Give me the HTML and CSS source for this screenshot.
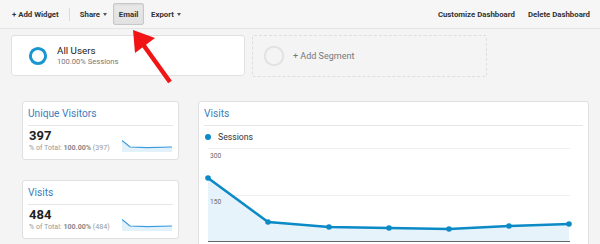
FILE: index.html
```html
<!DOCTYPE html>
<html>
<head>
<meta charset="utf-8">
<link rel="stylesheet" href="styles.css">
</head>
<body>
<div class="toolbar">
  <span class="tb-item">+ Add Widget</span>
  <span class="tb-sep"></span>
  <span class="tb-item share">Share <span class="caret"></span></span>
  <span class="tb-btn">Email</span>
  <span class="tb-item export">Export <span class="caret"></span></span>
  <span class="tb-spacer"></span>
  <span class="tb-item">Customize Dashboard</span>
  <span class="tb-item last">Delete Dashboard</span>
</div>

<div class="segments">
  <div class="seg-card">
    <svg class="ring" width="20" height="20" viewBox="0 0 20 20"><circle cx="10" cy="10" r="7.6" fill="none" stroke="#1b95d2" stroke-width="3"/></svg>
    <div class="seg-text">
      <div class="seg-name">All Users</div>
      <div class="seg-sub">100.00% Sessions</div>
    </div>
  </div>
  <div class="seg-add">
    <svg class="ring" width="22" height="22" viewBox="0 0 22 22"><circle cx="11" cy="11" r="9.2" fill="none" stroke="#e2e2e2" stroke-width="2"/></svg>
    <span class="seg-add-text">+ Add Segment</span>
  </div>
</div>

<div class="widgets">
  <div class="col-left">
    <div class="card small">
      <div class="card-title">Unique Visitors</div>
      <div class="small-body">
        <div class="metric">
          <div class="metric-val">397</div>
          <div class="metric-pct">% of Total: <b>100.00%</b> (397)</div>
        </div>
        <svg class="spark" width="51" height="12" viewBox="0 0 51 12">
          <polygon points="0,0 8,7 25,8 50,7 50,12 0,12" fill="#e3f1fb"/>
          <polyline points="0,0.5 8,7 25,7.6 50,7" fill="none" stroke="#3a9be0" stroke-width="1.2"/>
        </svg>
      </div>
    </div>
    <div class="card small">
      <div class="card-title">Visits</div>
      <div class="small-body">
        <div class="metric">
          <div class="metric-val">484</div>
          <div class="metric-pct">% of Total: <b>100.00%</b> (484)</div>
        </div>
        <svg class="spark" width="51" height="12" viewBox="0 0 51 12">
          <polygon points="0,0 8,7 25,8 50,7 50,12 0,12" fill="#e3f1fb"/>
          <polyline points="0,0.5 8,7 25,7.6 50,7" fill="none" stroke="#3a9be0" stroke-width="1.2"/>
        </svg>
      </div>
    </div>
  </div>
  <div class="card big">
    <div class="card-title">Visits</div>
    <div class="legend"><span class="dot"></span>Sessions</div>
    <svg class="chart" width="380" height="95" viewBox="0 0 380 95">
      <line x1="4" y1="0.5" x2="366" y2="0.5" stroke="#eeeeee" stroke-width="1"/>
      <line x1="4" y1="47.5" x2="366" y2="47.5" stroke="#eeeeee" stroke-width="1"/>
      <polygon points="4,30 64,74 125,79 185,80 245,81 305,78 365,76 365,93 4,93" fill="#e7f3fa"/>
      <text x="6" y="10" class="axis">300</text>
      <text x="6" y="56" class="axis">150</text>
      <polyline points="4,30 64,74 125,79 185,80 245,81 305,78 365,76" fill="none" stroke="#0b8ac6" stroke-width="2.6" stroke-linejoin="round"/>
      <g fill="#0b8ac6">
        <circle cx="4" cy="30" r="2.8"/>
        <circle cx="64" cy="74" r="2.8"/>
        <circle cx="125" cy="79" r="2.8"/>
        <circle cx="185" cy="80" r="2.8"/>
        <circle cx="245" cy="81" r="2.8"/>
        <circle cx="305" cy="78" r="2.8"/>
        <circle cx="365" cy="76" r="2.8"/>
      </g>
      <line x1="4" y1="93.5" x2="366" y2="93.5" stroke="#666" stroke-width="1"/>
    </svg>
  </div>
</div>

<svg class="arrow" width="600" height="244" viewBox="0 0 600 244">
  <line x1="170" y1="82" x2="142" y2="43" stroke="#f01414" stroke-width="4.5"/>
  <polygon points="133,30 155,38 135,53" fill="#f01414"/>
</svg>
</body>
</html>
```

FILE: styles.css
```css
html, body {
  margin: 0;
  padding: 0;
}
body {
  width: 600px;
  height: 244px;
  overflow: hidden;
  background: #f4f4f4;
  font-family: Roboto, "Liberation Sans", Arial, sans-serif;
  color: #333;
  position: relative;
}
.toolbar {
  height: 28px;
  display: flex;
  align-items: center;
  padding: 0 10px 0 12px;
  background: #f6f6f6;
  border-bottom: 1px solid #e4e4e4;
  font-size: 7.8px;
  font-weight: bold;
  color: #333;
}
.tb-item {
  white-space: nowrap;
  display: flex;
  align-items: center;
}
.tb-sep {
  width: 1px;
  height: 13px;
  background: #dcdcdc;
  margin: 0 10px 0 10px;
}
.caret {
  display: inline-block;
  width: 0;
  height: 0;
  border-left: 2.5px solid transparent;
  border-right: 2.5px solid transparent;
  border-top: 3px solid #555;
  margin-left: 3px;
}
.tb-btn {
  margin-left: 6px;
  width: 29px;
  height: 20px;
  display: flex;
  align-items: center;
  justify-content: center;
  border: 1px solid #c8c8c8;
  border-radius: 2px;
  background: linear-gradient(#e9e9e9, #e2e2e2);
  box-shadow: inset 0 1px 2px rgba(0,0,0,0.08);
}
.export {
  margin-left: 7px;
}
.tb-spacer {
  flex: 1;
}
.tb-item.last {
  margin-left: 13px;
}
.segments {
  display: flex;
  gap: 7px;
  padding: 6px 0 0 11px;
}
.seg-card {
  width: 234px;
  height: 41px;
  box-sizing: border-box;
  background: #fff;
  border: 1px solid #e1e1e1;
  border-radius: 3px;
  display: flex;
  align-items: center;
  padding-left: 16px;
}
.seg-card .ring {
  margin-right: 9px;
}
.seg-name {
  font-size: 9.8px;
  color: #222;
  line-height: 12px;
}
.seg-sub {
  font-size: 7.6px;
  color: #777;
  line-height: 10px;
}
.seg-add {
  width: 235px;
  height: 42px;
  box-sizing: border-box;
  border: 1px dashed #dedede;
  border-radius: 2px;
  display: flex;
  align-items: center;
  padding-left: 10px;
}
.seg-add .ring {
  margin-right: 8px;
}
.seg-add-text {
  font-size: 9px;
  color: #777;
}
.widgets {
  display: flex;
  align-items: flex-start;
  gap: 19px;
  padding: 24px 0 0 22px;
}
.col-left {
  display: flex;
  flex-direction: column;
  gap: 20px;
}
.card {
  background: #fff;
  border: 1px solid #e0e0e0;
  border-radius: 3px;
  box-sizing: border-box;
}
.card.small {
  width: 157px;
  height: 59px;
  padding: 0 5px;
}
.card-title {
  font-size: 10.2px;
  color: #3b7dbd;
  height: 23px;
  line-height: 24px;
  border-bottom: 1px solid #e6e6e6;
}
.small-body {
  display: flex;
  justify-content: space-between;
  align-items: flex-end;
  padding-top: 3px;
}
.metric-val {
  font-size: 13px;
  font-weight: bold;
  color: #222;
  line-height: 14px;
  padding-left: 1px;
}
.metric-pct {
  font-size: 7.1px;
  color: #999;
  line-height: 10px;
  padding-left: 1px;
  white-space: nowrap;
}
.metric-pct b {
  color: #888;
}
.spark {
  display: block;
  margin-bottom: 1px;
}
.card.big {
  width: 391px;
  height: 160px;
  padding: 0 5px;
}
.legend {
  display: flex;
  align-items: center;
  font-size: 8.7px;
  color: #333;
  height: 22px;
  padding-left: 1px;
}
.dot {
  width: 6px;
  height: 6px;
  border-radius: 50%;
  background: #0b8ac6;
  margin-right: 7px;
}
.chart {
  display: block;
}
.axis {
  font-size: 6.6px;
  fill: #666;
  font-family: Roboto, "Liberation Sans", Arial, sans-serif;
}
.arrow {
  position: absolute;
  left: 0;
  top: 0;
  pointer-events: none;
}
```
